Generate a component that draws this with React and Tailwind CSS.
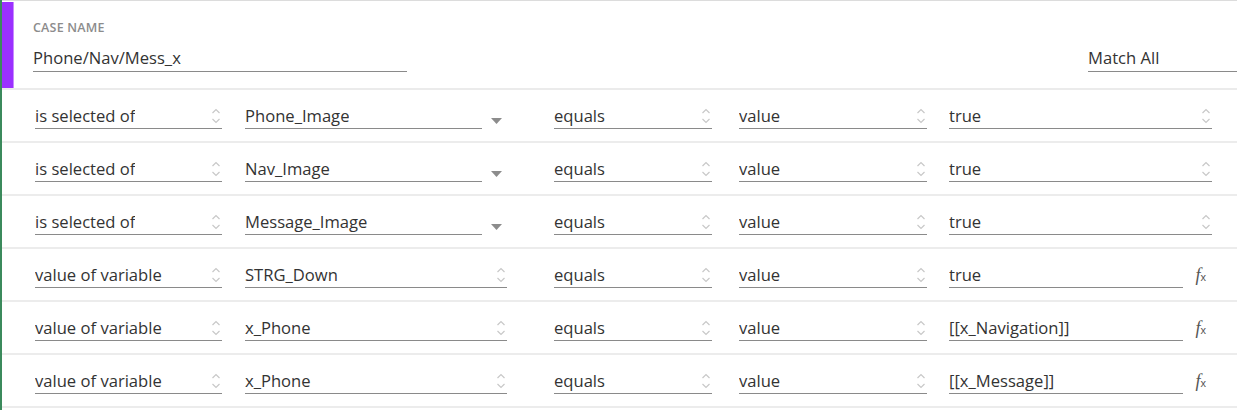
const rows = [
  { a: 'is selected of', b: 'Phone_Image', bKind: 'caret', e: 'true', eKind: 'spin' },
  { a: 'is selected of', b: 'Nav_Image', bKind: 'caret', e: 'true', eKind: 'spin' },
  { a: 'is selected of', b: 'Message_Image', bKind: 'caret', e: 'true', eKind: 'spin' },
  { a: 'value of variable', b: 'STRG_Down', bKind: 'spin', e: 'true', eKind: 'fx' },
  { a: 'value of variable', b: 'x_Phone', bKind: 'spin', e: '[[x_Navigation]]', eKind: 'fx' },
  { a: 'value of variable', b: 'x_Phone', bKind: 'spin', e: '[[x_Message]]', eKind: 'fx' },
]

function Spinner() {
  return (
    <svg width="10" height="18" viewBox="0 0 10 18" className="shrink-0" fill="none" stroke="#c8c8c8" strokeWidth="1.2">
      <path d="M1.5 6 L5 2.5 L8.5 6" />
      <path d="M1.5 12 L5 15.5 L8.5 12" />
    </svg>
  )
}

function Field({ text, width, spin }) {
  return (
    <div className={`${width} h-[25px] mt-[2px] flex items-center justify-between border-b border-[#8a8a8a] pr-[1px]`}>
      <span className="leading-[24px] truncate">{text}</span>
      {spin && <Spinner />}
    </div>
  )
}

function Fx() {
  return (
    <span className="mr-[6px] text-[#555] italic text-[18px] leading-none" style={{ fontFamily: '"Liberation Serif", serif' }}>
      f<span className="text-[11px] not-italic" style={{ fontFamily: '"Liberation Sans", sans-serif' }}>x</span>
    </span>
  )
}

export default function App() {
  return (
    <div className="w-[1237px] h-[410px] bg-white border-l-2 border-[#3b8a5c] text-[#333] text-[16.6px] overflow-hidden"
      style={{ fontFamily: '"Open Sans", "Liberation Sans", sans-serif' }}>
      <div className="flex h-[90px] border-t border-[#dcdcdc] border-b-2 border-b-[#ebebeb]">
        <div className="w-[12px] bg-[#9b30ff] border-r border-[#c88bff] mt-[1px]" />
        <div className="flex-1 flex items-end justify-between pl-[19px] pb-[16px]">
          <div className="w-[374px]">
            <div className="text-[12.5px] font-semibold text-[#8c8c8c] tracking-[0.2px] mb-[8px]">CASE NAME</div>
            <div className="h-[26px] leading-[24px] border-b border-[#8a8a8a]">Phone/Nav/Mess_x</div>
          </div>
          <div className="w-[149px] h-[26px] leading-[24px] border-b border-[#8a8a8a]">Match All</div>
        </div>
      </div>
      {rows.map((r, i) => (
        <div key={i} className="h-[53px] flex items-center border-b-2 border-[#ececec] pl-[33px]">
          <Field text={r.a} width="w-[187px]" spin />
          <div className="w-[262px] ml-[23px] flex items-center justify-between">
            {r.bKind === 'caret' ? (
              <>
                <Field text={r.b} width="w-[237px]" />
                <svg width="11" height="6" viewBox="0 0 11 6" className="mr-[5px] mt-[10px]">
                  <path d="M0 0 H11 L5.5 6 Z" fill="#8c8c8c" />
                </svg>
              </>
            ) : (
              <Field text={r.b} width="w-[262px]" spin />
            )}
          </div>
          <div className="ml-[47px]">
            <Field text="equals" width="w-[158px]" spin />
          </div>
          <div className="ml-[27px]">
            <Field text="value" width="w-[188px]" spin />
          </div>
          <div className="w-[263px] ml-[22px] flex items-center justify-between">
            {r.eKind === 'spin' ? (
              <Field text={r.e} width="w-[263px]" spin />
            ) : (
              <>
                <Field text={r.e} width="w-[234px]" />
                <Fx />
              </>
            )}
          </div>
        </div>
      ))}
    </div>
  )
}
